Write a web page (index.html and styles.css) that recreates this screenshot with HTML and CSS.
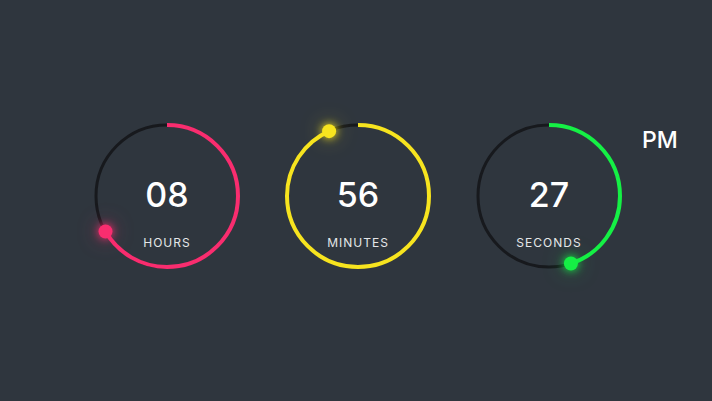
FILE: index.html
```html
<!DOCTYPE html>
<html>
<head>
<meta charset="utf-8">
<link rel="stylesheet" href="styles.css">
</head>
<body>
<div class="clock">
  <div class="unit unit-hours">
    <svg class="ring" viewBox="0 0 150 150" width="150" height="150">
      <circle class="track" cx="75" cy="75" r="71"></circle>
      <circle class="arc" cx="75" cy="75" r="71" style="stroke-dashoffset:148.7"></circle>
      <circle class="dot" cx="13.51" cy="110.5" r="7"></circle>
    </svg>
    <div class="readout">
      <span class="value">08</span>
      <span class="label">HOURS</span>
    </div>
  </div>
  <div class="unit unit-minutes">
    <svg class="ring" viewBox="0 0 150 150" width="150" height="150">
      <circle class="track" cx="75" cy="75" r="71"></circle>
      <circle class="arc" cx="75" cy="75" r="71" style="stroke-dashoffset:29.7"></circle>
      <circle class="dot" cx="46.12" cy="10.14" r="7"></circle>
    </svg>
    <div class="readout">
      <span class="value">56</span>
      <span class="label">MINUTES</span>
    </div>
  </div>
  <div class="unit unit-seconds">
    <svg class="ring" viewBox="0 0 150 150" width="150" height="150">
      <circle class="track" cx="75" cy="75" r="71"></circle>
      <circle class="arc" cx="75" cy="75" r="71" style="stroke-dashoffset:245.4"></circle>
      <circle class="dot" cx="96.94" cy="142.52" r="7"></circle>
    </svg>
    <div class="readout">
      <span class="value">27</span>
      <span class="label">SECONDS</span>
    </div>
  </div>
  <div class="ampm">PM</div>
</div>
</body>
</html>
```
FILE: styles.css
```css
html, body {
  margin: 0;
  padding: 0;
}
body {
  width: 712px;
  height: 401px;
  background: #2f363e;
  display: flex;
  align-items: center;
  justify-content: center;
  font-family: "Inter", "Noto Sans", sans-serif;
  color: #fff;
  overflow: hidden;
}
.clock {
  position: relative;
  display: flex;
  gap: 41px;
  margin-left: 4px;
  margin-bottom: 10px;
}
.unit {
  display: grid;
  width: 150px;
  height: 150px;
}
.ring, .readout {
  grid-area: 1 / 1;
}
.ring {
  overflow: visible;
}
.track {
  fill: none;
  stroke: #17191d;
  stroke-width: 3;
}
.arc {
  fill: none;
  stroke-width: 4;
  stroke-dasharray: 446.1;
  transform: rotate(-90deg);
  transform-origin: 75px 75px;
}
.unit-hours { --c: #f92d6f; --g: rgba(249, 45, 111, 0.35); }
.unit-minutes { --c: #f7e41f; --g: rgba(247, 228, 31, 0.3); }
.unit-seconds { --c: #15f045; --g: rgba(21, 240, 69, 0.3); }
.arc {
  stroke: var(--c);
}
.dot {
  fill: var(--c);
  filter: drop-shadow(0 0 4px var(--c)) drop-shadow(0 0 10px var(--g));
}
.readout {
  display: flex;
  flex-direction: column;
  align-items: center;
  padding-top: 54px;
}
.value {
  font-size: 34px;
  line-height: 40px;
  font-weight: 500;
}
.label {
  margin-top: 21px;
  font-size: 12px;
  line-height: 14px;
  letter-spacing: 1px;
  color: #e4e6e8;
}
.ampm {
  position: absolute;
  left: 550px;
  top: 5px;
  font-size: 23px;
  line-height: 28px;
  font-weight: 500;
}
```
